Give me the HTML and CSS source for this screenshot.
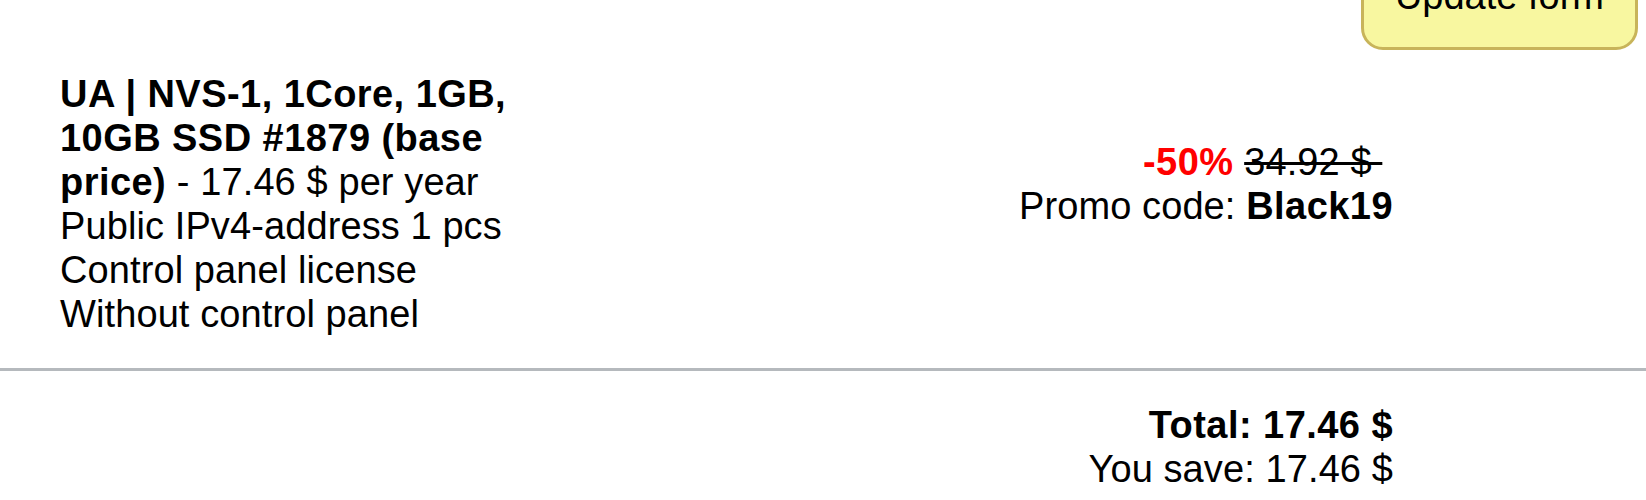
FILE: index.html
```html
<!DOCTYPE html>
<html lang="en">
<head>
<meta charset="utf-8">
<title>Order summary</title>
<link rel="stylesheet" href="styles.css">
</head>
<body>
<div class="toolbar">
  <button class="update-btn" type="button">Update form</button>
</div>

<div class="order-row">
  <div class="order-item">
    <div><b>UA | NVS-1, 1Core, 1GB, 10GB SSD #1879 (base price)</b> - 17.46 $ per year</div>
    <div>Public IPv4-address 1 pcs</div>
    <div>Control panel license</div>
    <div>Without control panel</div>
  </div>
  <div class="order-price">
    <div><span class="discount">-50%</span> <del class="old-price">34.92 $&nbsp;</del>&nbsp;</div>
    <div>Promo code: <b>Black19</b></div>
  </div>
</div>

<hr class="divider">

<div class="order-total">
  <div><b>Total: 17.46 $</b></div>
  <div>You save: 17.46 $</div>
</div>
</body>
</html>
```

FILE: styles.css
```css
html, body {
  margin: 0;
  padding: 0;
  background: #ffffff;
}

body {
  font-family: "Liberation Sans", Arial, sans-serif;
  font-size: 38px;
  line-height: 44px;
  letter-spacing: 0.1px;
  color: #000000;
  overflow: hidden;
}

b {
  letter-spacing: 0.45px;
}

.toolbar {
  display: flex;
  justify-content: flex-end;
  padding-right: 8px;
}

.update-btn {
  margin-top: -58px;
  padding: 29px 31px;
  font-family: "Liberation Sans", Arial, sans-serif;
  font-size: 38px;
  line-height: 44px;
  color: #000000;
  background: #f8f7a0;
  border: 3px solid #c8b45a;
  border-radius: 22px;
}

.order-row {
  display: flex;
  align-items: flex-start;
  padding: 22px 253px 0 60px;
}

.order-item {
  width: 470px;
}

.order-price {
  flex: 1;
  text-align: right;
  padding-top: 68px;
}

.discount {
  color: #ff0000;
  font-weight: bold;
  letter-spacing: 0.45px;
}

.old-price {
  text-decoration: line-through;
  text-decoration-thickness: 3px;
}

.divider {
  margin: 32px 0 0;
  height: 3px;
  border: 0;
  background: #b5b9bd;
}

.order-total {
  padding: 32px 253px 0 0;
  text-align: right;
}
```
